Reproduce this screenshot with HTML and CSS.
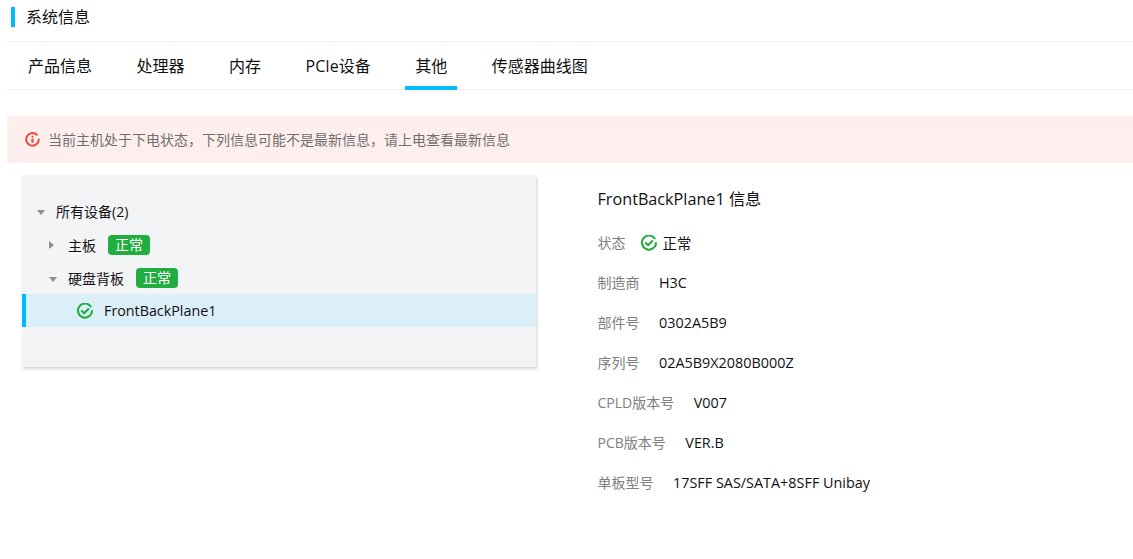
FILE: index.html
```html
<!DOCTYPE html>
<html lang="zh-CN">
<head>
<meta charset="utf-8">
<title>系统信息</title>
<link rel="stylesheet" href="styles.css">
</head>
<body>
<header class="title-bar"><h1 class="title">系统信息</h1></header>
<nav class="tabs">
  <a class="tab">产品信息</a>
  <a class="tab">处理器</a>
  <a class="tab">内存</a>
  <a class="tab">PCIe设备</a>
  <a class="tab active">其他</a>
  <a class="tab">传感器曲线图</a>
</nav>
<div class="alert">
  <svg class="alert-icon" viewBox="0 0 15 15" width="15" height="15"><path d="M11.9 2.8A6.3 6.3 0 1 0 13.8 7.5" fill="none" stroke="#ee4a3f" stroke-width="2" stroke-linecap="round"/><circle cx="7.5" cy="4.6" r="1.1" fill="#ee4a3f"/><rect x="6.4" y="6.5" width="2.2" height="4.3" rx=".4" fill="#ee4a3f"/></svg>
  <span class="alert-text">当前主机处于下电状态<span class="punct">，</span>下列信息可能不是最新信息<span class="punct">，</span>请上电查看最新信息</span>
</div>
<main class="content">
  <section class="tree">
    <div class="node level0"><i class="caret down"></i><span>所有设备(2)</span></div>
    <div class="node level1"><i class="caret right"></i><span>主板</span><b class="badge">正常</b></div>
    <div class="node level1"><i class="caret down"></i><span>硬盘背板</span><b class="badge">正常</b></div>
    <div class="node level2 selected">
      <svg class="ok" viewBox="0 0 16 16" width="16" height="16"><path d="M13.6 3.4A7 7 0 1 0 15 8" fill="none" stroke="#1fae3f" stroke-width="2" stroke-linecap="round"/><path d="M4.8 8l2.3 2.3 4.2-4.3" fill="none" stroke="#1fae3f" stroke-width="2" stroke-linecap="round" stroke-linejoin="round"/></svg>
      <span class="device">FrontBackPlane1</span>
    </div>
  </section>
  <section class="details">
    <h2 class="details-title">FrontBackPlane1 信息</h2>
    <div class="row status"><span class="label">状态</span>
      <svg class="ok" viewBox="0 0 16 16" width="16" height="16"><path d="M13.6 3.4A7 7 0 1 0 15 8" fill="none" stroke="#1fae3f" stroke-width="2" stroke-linecap="round"/><path d="M4.8 8l2.3 2.3 4.2-4.3" fill="none" stroke="#1fae3f" stroke-width="2" stroke-linecap="round" stroke-linejoin="round"/></svg>
      <span class="value">正常</span></div>
    <div class="row"><span class="label">制造商</span><span class="value">H3C</span></div>
    <div class="row"><span class="label">部件号</span><span class="value">0302A5B9</span></div>
    <div class="row"><span class="label">序列号</span><span class="value">02A5B9X2080B000Z</span></div>
    <div class="row"><span class="label">CPLD版本号</span><span class="value">V007</span></div>
    <div class="row"><span class="label">PCB版本号</span><span class="value">VER.B</span></div>
    <div class="row"><span class="label">单板型号</span><span class="value">17SFF SAS/SATA+8SFF Unibay</span></div>
  </section>
</main>
</body>
</html>
```
FILE: styles.css
```css
* { box-sizing: border-box; }
html, body { margin: 0; height: 559px; overflow: hidden; }
body {
  padding: 7px 0 0 7px;
  background: #fff;
  color: #111;
  font-family: "Open Sans", "Noto Sans CJK SC", sans-serif;
  font-size: 14px;
}
.title-bar {
  height: 35px;
  padding-left: 4px;
  border-bottom: 1px solid #eceef2;
}
.title {
  margin: 0;
  height: 20px;
  padding-left: 11px;
  border-left: 4px solid #00bcff;
  font-size: 16px;
  font-weight: 400;
  line-height: 20px;
}
.tabs {
  display: flex;
  height: 48px;
  padding-left: 11px;
  gap: 24.5px;
  border-bottom: 1px solid #eceef2;
}
.tab {
  height: 48px;
  padding: 0 10px;
  font-size: 16px;
  line-height: 49px;
  white-space: nowrap;
}
.tab.active { border-bottom: 4px solid #00bcff; }
.alert {
  display: flex;
  align-items: center;
  gap: 8px;
  height: 47px;
  margin-top: 26px;
  padding-left: 18px;
  background: #feefee;
  color: #6f6f6f;
  font-size: 14px;
}
.alert-text { line-height: 19px; padding-bottom: 1px; }
.punct { font-family: "Noto Sans CJK TC", sans-serif; }
.alert-icon { flex: none; }
.content {
  display: flex;
  margin-top: 12px;
  padding-left: 15px;
}
.tree {
  width: 514px;
  height: 192px;
  padding-top: 20px;
  background: #f3f4f6;
  box-shadow: 1px 2px 3px rgba(0, 0, 0, .18);
}
.node {
  display: flex;
  align-items: center;
  height: 33px;
}
.level0 { padding-left: 15px; padding-bottom: 1px; }
.level1 { padding-left: 27px; }
.level2 { padding-left: 55px; }
.selected {
  background: #dbeff9;
  box-shadow: inset 4px 0 0 #00bcff;
}
.device { font-size: 14.3px; }
.caret {
  flex: none;
  border-style: solid;
  border-color: transparent;
}
.caret.down {
  width: 8px;
  height: 5px;
  margin-top: 3px;
  margin-right: 11px;
  border-width: 5px 4px 0;
  border-top-color: #8f8f8f;
}
.caret.right {
  width: 5px;
  height: 8px;
  margin-right: 14px;
  border-width: 4px 0 4px 5px;
  border-left-color: #8f8f8f;
}
.badge {
  width: 42px;
  height: 20px;
  margin-left: 12px;
  border-radius: 4px;
  background: #1fae3f;
  color: #fff;
  font-weight: 400;
  text-align: center;
  line-height: 20px;
}
.selected .ok { margin-right: 11px; }
.details {
  margin-left: 61.5px;
  padding-top: 12px;
}
.details-title {
  margin: 0 0 11px;
  height: 24px;
  font-size: 16.2px;
  font-weight: 400;
  line-height: 24px;
}
.row {
  display: flex;
  align-items: center;
  gap: 19.5px;
  height: 40px;
  white-space: nowrap;
}
.status { gap: 0; }
.status .ok { margin: 1px 6px 0 15px; }
.label { color: #808080; font-size: 14px; }
.value { font-size: 14.4px; }
```
